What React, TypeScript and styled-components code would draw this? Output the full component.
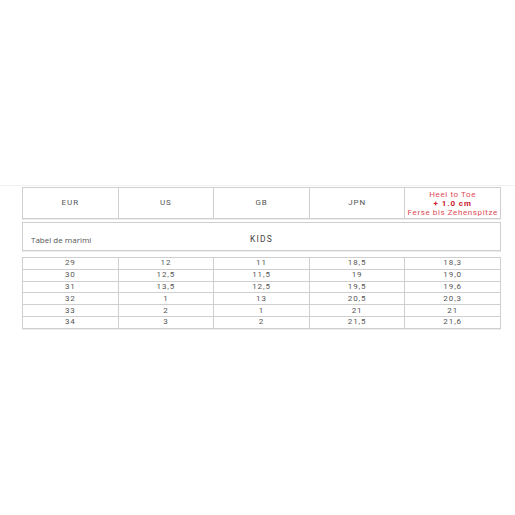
import React from 'react';
import styled, { createGlobalStyle } from 'styled-components';

const GlobalStyle = createGlobalStyle`
  html, body { margin: 0; padding: 0; background: #fff; }
  body { font-family: Roboto, "Liberation Sans", sans-serif; }
`;

const Page = styled.div`
  width: 515px;
  height: 515px;
  padding-top: 185px;
  box-sizing: border-box;
`;

const Frame = styled.div`
  border-top: 1px solid #f1f1f1;
  padding: 1px 14px 0 22px;
`;

const Grid = styled.div<{ $rowH: number }>`
  display: grid;
  grid-template-columns: repeat(5, 1fr);
  grid-auto-rows: ${(p) => p.$rowH}px;
  width: 479px;
  border-top: 1px solid #cfcfcf;
  border-left: 1px solid #cfcfcf;
  box-sizing: border-box;
  box-shadow: 0 1px 0 #ececec;
`;

const Cell = styled.div`
  display: flex;
  flex-direction: column;
  align-items: center;
  justify-content: center;
  border-right: 1px solid #cfcfcf;
  border-bottom: 1px solid #cfcfcf;
  font-size: 8px;
  letter-spacing: 0.9px;
  color: #555;
  line-height: 1;
`;

const RedLine = styled.span<{ $bold?: boolean }>`
  color: ${(p) => (p.$bold ? '#c8202e' : '#de4a55')};
  font-weight: ${(p) => (p.$bold ? 700 : 400)};
  font-size: 8px;
  letter-spacing: ${(p) => (p.$bold ? '0.9px' : '0.6px')};
  line-height: 9px;
`;

const Section = styled.div`
  position: relative;
  display: flex;
  align-items: center;
  width: 479px;
  height: 29px;
  margin: 3px 0 6px;
  box-sizing: border-box;
  border: 1px solid #cfcfcf;
  box-shadow: 0 1px 0 #ececec;
`;

const SectionLabel = styled.span`
  padding-left: 8px;
  padding-top: 5px;
  font-family: "Open Sans", sans-serif;
  font-size: 8px;
  color: #555;
`;

const SectionTitle = styled.span`
  position: absolute;
  left: 0;
  right: 0;
  top: 11px;
  text-align: center;
  font-size: 8.5px;
  font-weight: 400;
  letter-spacing: 1.2px;
  color: #444;
  pointer-events: none;
`;

const rows = [
  ['29', '12', '11', '18,5', '18,3'],
  ['30', '12,5', '11,5', '19', '19,0'],
  ['31', '13,5', '12,5', '19,5', '19,6'],
  ['32', '1', '13', '20,5', '20,3'],
  ['33', '2', '1', '21', '21'],
  ['34', '3', '2', '21,5', '21,6'],
];

export default function App() {
  return (
    <Page>
      <GlobalStyle />
      <Frame>
        <Grid $rowH={31}>
          <Cell>EUR</Cell>
          <Cell>US</Cell>
          <Cell>GB</Cell>
          <Cell>JPN</Cell>
          <Cell>
            <RedLine>Heel to Toe</RedLine>
            <RedLine $bold>+ 1.0 cm</RedLine>
            <RedLine>Ferse bis Zehenspitze</RedLine>
          </Cell>
        </Grid>
        <Section>
          <SectionLabel>Tabel de marimi</SectionLabel>
          <SectionTitle>KIDS</SectionTitle>
        </Section>
        <Grid $rowH={11.8}>
          {rows.map((r) =>
            r.map((v, i) => <Cell key={r[0] + '-' + i}>{v}</Cell>),
          )}
        </Grid>
      </Frame>
    </Page>
  );
}
